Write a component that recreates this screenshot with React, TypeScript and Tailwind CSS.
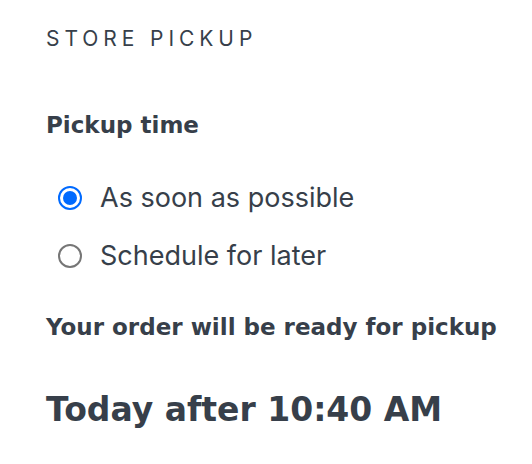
import { useState } from "react";

type Option = "asap" | "later";

const options: { id: Option; label: string }[] = [
  { id: "asap", label: "As soon as possible" },
  { id: "later", label: "Schedule for later" },
];

const heading = "font-bold [font-family:'DejaVu_Sans',sans-serif]";

export default function App() {
  const [choice, setChoice] = useState<Option>("asap");

  return (
    <div className="min-h-[464px] w-[532px] bg-white pl-[46px] pt-[24px] text-[#373f4a] [font-family:Inter,'Liberation_Sans',sans-serif]">
      <h2 className="text-[21px] font-normal uppercase leading-[30px] tracking-[0.235em]">
        Store pickup
      </h2>

      <p className={`mt-[56px] text-[23px] leading-[30px] ${heading}`}>Pickup time</p>

      <div className="mt-[46px] flex flex-col gap-[34px] pl-[12px]">
        {options.map((o) => {
          const selected = choice === o.id;
          return (
            <button
              key={o.id}
              type="button"
              onClick={() => setChoice(o.id)}
              className="flex items-center gap-[18px] text-left"
            >
              <span
                className={`flex h-[24px] w-[24px] shrink-0 items-center justify-center rounded-full border-2 ${
                  selected ? "border-[#006aff]" : "border-[#767676]"
                }`}
              >
                {selected ? <span className="h-[14px] w-[14px] rounded-full bg-[#006aff]" /> : null}
              </span>
              <span className="text-[27px] leading-[24px]">{o.label}</span>
            </button>
          );
        })}
      </div>

      <p className={`mt-[44px] text-[23px] leading-[30px] ${heading}`}>
        Your order will be ready for pickup
      </p>

      <p className={`mt-[48px] text-[33px] leading-[40px] ${heading}`}>Today after 10:40 AM</p>
    </div>
  );
}
